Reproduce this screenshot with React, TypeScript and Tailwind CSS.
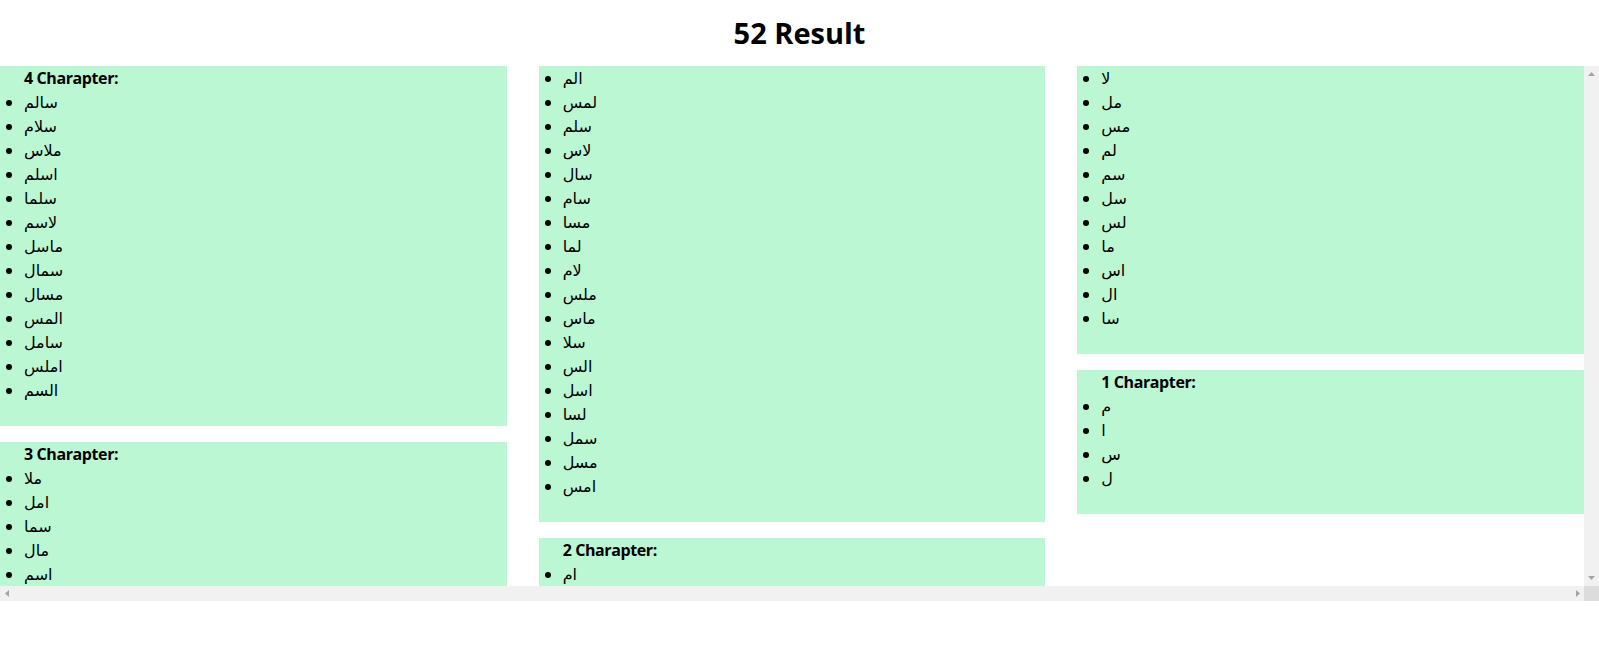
import React from "react";

const groups: { title: string; items: string[] }[] = [
  {
    title: "4 Charapter:",
    items: ["سالم", "سلام", "ملاس", "اسلم", "سلما", "لاسم", "ماسل", "سمال", "مسال", "المس", "سامل", "املس", "السم"],
  },
  {
    title: "3 Charapter:",
    items: [
      "ملا", "امل", "سما", "مال", "اسم",
      "الم", "لمس", "سلم", "لاس", "سال", "سام", "مسا", "لما", "لام", "ملس", "ماس", "سلا", "الس", "اسل", "لسا", "سمل", "مسل", "امس",
    ],
  },
  {
    title: "2 Charapter:",
    items: ["ام", "لا", "مل", "مس", "لم", "سم", "سل", "لس", "ما", "اس", "ال", "سا"],
  },
  {
    title: "1 Charapter:",
    items: ["م", "ا", "س", "ل"],
  },
];

function Tri({ dir }: { dir: "up" | "down" | "left" | "right" }) {
  const pts =
    dir === "up"
      ? "0,4 3.5,0 7,4"
      : dir === "down"
      ? "0,0 7,0 3.5,4"
      : dir === "left"
      ? "4,0 4,7 0,3.5"
      : "0,0 4,3.5 0,7";
  const w = dir === "up" || dir === "down" ? 7 : 4;
  const h = dir === "up" || dir === "down" ? 4 : 7;
  return (
    <svg width={w} height={h} viewBox={`0 0 ${w} ${h}`}>
      <polygon points={pts} fill="#a3a3a3" />
    </svg>
  );
}

export default function App() {
  return (
    <div className="w-full bg-white text-black font-['Open_Sans','DejaVu_Sans',sans-serif]">
      <h1 className="h-[66px] flex items-center justify-center text-[29px] font-bold leading-none pb-[2px]">
        52 Result
      </h1>
      <div className="w-full h-[535px] flex flex-col">
        <div className="flex h-[520px]">
          <div className="flex-1 h-[520px] overflow-hidden">
            <div className="h-[520px] columns-3 gap-8 [column-fill:auto]">
              {groups.map((g) => (
                <div key={g.title} className="bg-[#bbf7d3] mb-4 pb-6">
                  <ul className="list-disc pl-6 text-base leading-6">
                    <li className="list-none font-bold tracking-[-0.4px]">{g.title}</li>
                    {g.items.map((w, i) => (
                      <li key={i}>{w}</li>
                    ))}
                  </ul>
                </div>
              ))}
            </div>
          </div>
          <div className="w-[15px] bg-[#f1f1f1] flex flex-col items-center justify-between pt-[6px] pb-[6px]">
            <Tri dir="up" />
            <Tri dir="down" />
          </div>
        </div>
        <div className="h-[15px] flex bg-[#f1f1f1]">
          <div className="flex-1 flex items-center justify-between pl-[5px] pr-[4px]">
            <Tri dir="left" />
            <Tri dir="right" />
          </div>
          <div className="w-[15px] h-[15px] bg-[#dcdcdc]" />
        </div>
      </div>
    </div>
  );
}
